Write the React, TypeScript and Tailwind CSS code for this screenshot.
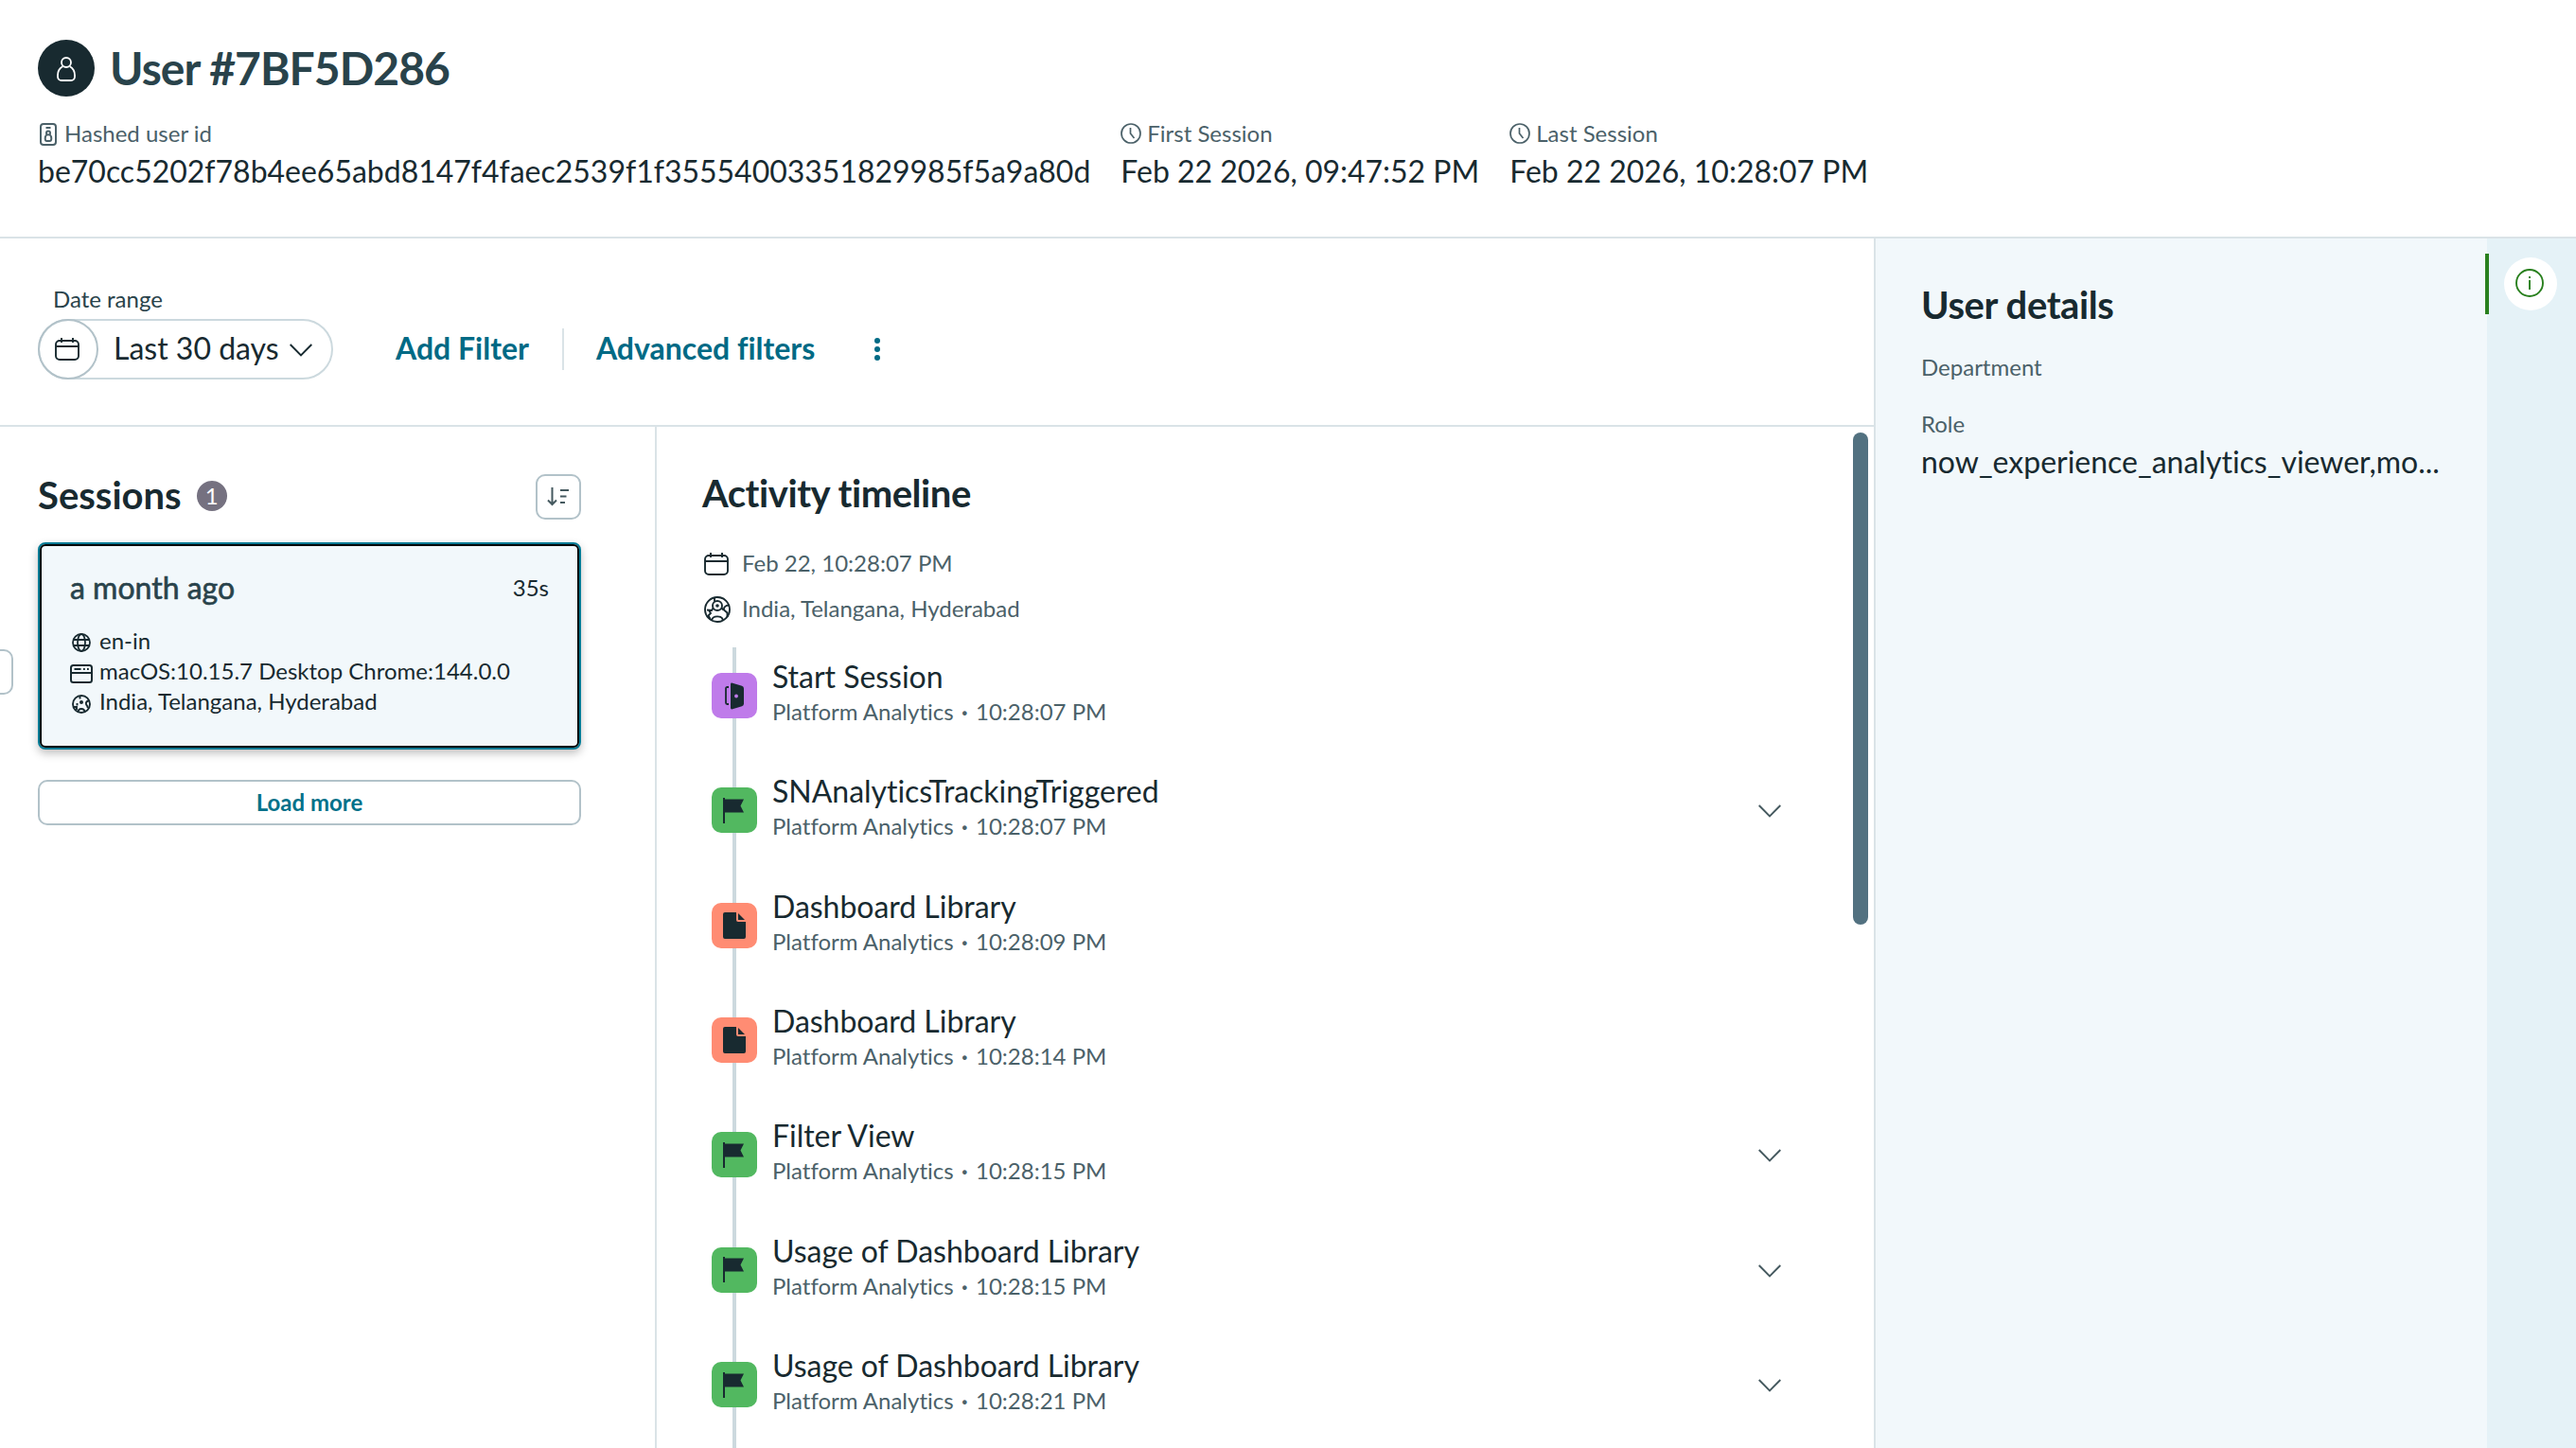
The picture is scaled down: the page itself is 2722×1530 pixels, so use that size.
import React from "react";

type EventKind = "session" | "event" | "page";

interface TimelineEvent {
  title: string;
  time: string;
  kind: EventKind;
  expandable?: boolean;
}

const events: TimelineEvent[] = [
  { title: "Start Session", time: "10:28:07 PM", kind: "session" },
  { title: "SNAnalyticsTrackingTriggered", time: "10:28:07 PM", kind: "event", expandable: true },
  { title: "Dashboard Library", time: "10:28:09 PM", kind: "page" },
  { title: "Dashboard Library", time: "10:28:14 PM", kind: "page" },
  { title: "Filter View", time: "10:28:15 PM", kind: "event", expandable: true },
  { title: "Usage of Dashboard Library", time: "10:28:15 PM", kind: "event", expandable: true },
  { title: "Usage of Dashboard Library", time: "10:28:21 PM", kind: "event", expandable: true },
];

const kindColor: Record<EventKind, string> = {
  session: "bg-[#bf7bea]",
  event: "bg-[#52b860]",
  page: "bg-[#ff8c73]",
};

function PersonIcon() {
  return (
    <svg width="20" height="26" viewBox="0 0 20 26" fill="none" stroke="white" strokeWidth="1.8">
      <circle cx="10" cy="6" r="5" />
      <path d="M6.200 10.200C3 12 1 15.500 1 19.500V21a4 4 0 0 0 4 4h10a4 4 0 0 0 4-4v-1.500c0-4-2-7.500-5.200-9.300" />
    </svg>
  );
}

function BadgeIcon() {
  return (
    <svg width="18" height="24" viewBox="0 0 18 24" fill="none" stroke="currentColor" strokeWidth="2">
      <rect x="1" y="1" width="16" height="22" rx="3" />
      <path d="M6.500 5h5" />
      <circle cx="9" cy="10.500" r="2" />
      <path d="M7.300 12.500c-2.300 1.800-2 6.500.2 6.500h3c2.200 0 2.500-4.700.2-6.500" />
    </svg>
  );
}

function ClockIcon() {
  return (
    <svg width="22" height="22" viewBox="0 0 22 22" fill="none" stroke="currentColor" strokeWidth="1.7">
      <circle cx="11" cy="11" r="10" />
      <path d="M10.500 5v6l4 5" />
    </svg>
  );
}

function CalendarIcon() {
  return (
    <svg width="26" height="24" viewBox="0 0 26 24" fill="none" stroke="#182a30" strokeWidth="1.9">
      <rect x="1" y="3" width="24" height="20" rx="4" />
      <path d="M1 9h24M7 0v5M19 0v5" />
    </svg>
  );
}

function ChevronIcon() {
  return (
    <svg width="24" height="14" viewBox="0 0 24 14" fill="none" stroke="currentColor" strokeWidth="1.9">
      <path d="M.7 1 12 12.500 23.300 1" />
    </svg>
  );
}

function SortIcon() {
  return (
    <svg width="24" height="20" viewBox="0 0 24 20" fill="none" stroke="#45595f" strokeWidth="2">
      <path d="M5.500 0v18M1 13.500l4.500 4.500 4.500-4.500M14 3h9M14 9.500h6.500M14 16h5" />
    </svg>
  );
}

function LanguageIcon() {
  return (
    <svg width="20" height="20" viewBox="0 0 20 20" fill="none" stroke="currentColor" strokeWidth="1.8">
      <circle cx="10" cy="10" r="9" />
      <ellipse cx="10" cy="10" rx="4" ry="9" />
      <path d="M1.500 7h17M1.500 13h17" />
    </svg>
  );
}

function BrowserIcon() {
  return (
    <svg width="24" height="20" viewBox="0 0 24 20" fill="none" stroke="currentColor" strokeWidth="2">
      <rect x="1" y="1" width="22" height="18" rx="2.5" />
      <path d="M1 9h22M4.500 5h7M14 5h1.800M18 5h1.800" />
    </svg>
  );
}

function LocationIcon() {
  return (
    <svg width="28" height="28" viewBox="0 0 28 28" fill="none" stroke="#182a30" strokeWidth="1.9">
      <circle cx="14" cy="14" r="13" />
      <circle cx="14" cy="10" r="5" />
      <circle cx="14" cy="10" r="1.800" fill="#182a30" stroke="none" />
      <path d="M11 1.500v4M9.500 12.500 8 15l-5-.5M5 15l2 3-2.500 2.500 2 3.500M8 25.500c1-5.500 11-5.500 12 0M18.500 12.500l2 2M26 9.500c-3 0-5.500 2-5 5l3.500 3v4.500" />
    </svg>
  );
}

function SmallLocationIcon() {
  return (
    <svg width="20" height="20" viewBox="0 0 20 20" fill="none" stroke="currentColor" strokeWidth="1.9">
      <circle cx="10" cy="10" r="9" />
      <circle cx="10" cy="8" r="2" fill="currentColor" stroke="none" />
      <path d="M8.500 1v3.500M5.500 9v2.500M1.500 13H5v3M6.500 18c.5-4 6.500-4 7 0M18 6.500c-2 0-3.500 1.500-3 3.500s2 1.500 1.500 4" />
    </svg>
  );
}

function EventIcon({ kind }: { kind: EventKind }) {
  if (kind === "session") {
    return (
      <svg width="20" height="29" viewBox="0 0 20 29">
        <path d="M4 5H2.500Q1 5 1 6.500v15Q1 23 2.500 23H4" fill="none" stroke="#182a30" strokeWidth="1.8" />
        <path d="M6 2Q6 .2 8 .7l10 3q2 .7 2 2.800v16q0 2-2 2.800l-10 3Q6 28.800 6 27Z" fill="#182a30" />
        <circle cx="12" cy="14.500" r="1.900" fill="#bf7bea" />
      </svg>
    );
  }
  if (kind === "page") {
    return (
      <svg width="24" height="28" viewBox="0 0 24 28" fill="#182a30">
        <path d="M2 0h12v8q0 2 2 2h8v16q0 2-2 2H2q-2 0-2-2V2q0-2 2-2Z" />
        <path d="M16 1l7 7h-7Z" />
      </svg>
    );
  }
  return (
    <svg className="mr-0.5" width="22" height="27" viewBox="0 0 22 27" fill="#182a30">
      <path d="M0 0h2v1.500h20l-3.500 7 3.500 7H2V27H0Z" />
    </svg>
  );
}

function TimelineRow({ event }: { event: TimelineEvent }) {
  return (
    <li className="flex h-[121.35px] items-center">
      <div className={`flex size-12 shrink-0 items-center justify-center rounded-[10px] ${kindColor[event.kind]}`}>
        <EventIcon kind={event.kind} />
      </div>
      <div className="-mt-1.5 ml-4 flex-1">
        <p className="text-[32px] leading-[40px] tracking-[-0.03px]">{event.title}</p>
        <p className="text-[24px] leading-[34px] text-[#4b6169]">
          Platform Analytics <span className="mx-[2.25px] font-bold">·</span> {event.time}
        </p>
      </div>
      {event.expandable && (
        <button className="mr-[98px] mt-0.5 text-[#45595f]">
          <ChevronIcon />
        </button>
      )}
    </li>
  );
}

function HeaderField({ icon, label, value }: { icon: React.ReactNode; label: string; value: string }) {
  return (
    <div>
      <div className="flex h-8 items-center gap-1.5 text-[24px] text-[#4b6169]">
        {icon}
        {label}
      </div>
      <p className="mt-1 text-[32px] leading-[40px] tracking-[-0.012px]">{value}</p>
    </div>
  );
}

export default function App() {
  return (
    <div className="flex h-[1530px] w-[2722px] flex-col overflow-hidden bg-white font-['Lato',sans-serif] text-[#182a30] [font-variant-ligatures:none]">
      <header className="h-[252px] shrink-0 border-b-2 border-[#dae3e7] px-10 pt-[42px]">
        <div className="flex h-[60px] items-center gap-4">
          <div className="flex size-[60px] items-center justify-center rounded-full bg-[#182a30] pt-0.5">
            <PersonIcon />
          </div>
          <h1 className="text-[48px] font-bold tracking-[-0.95px] text-[#29434b]">User #7BF5D286</h1>
        </div>
        <div className="mt-[23px] flex gap-8">
          <HeaderField
            icon={<span className="ml-0.5 mr-0.5 mt-0.5"><BadgeIcon /></span>}
            label="Hashed user id"
            value="be70cc5202f78b4ee65abd8147f4faec2539f1f35554003351829985f5a9a80d"
          />
          <HeaderField icon={<ClockIcon />} label="First Session" value="Feb 22 2026, 09:47:52 PM" />
          <HeaderField icon={<ClockIcon />} label="Last Session" value="Feb 22 2026, 10:28:07 PM" />
        </div>
      </header>

      <div className="flex min-h-0 flex-1">
        <main className="flex w-[1980px] shrink-0 flex-col">
          <div className="h-[199px] shrink-0 border-b-2 border-[#dae3e7] px-10 pt-[47px]">
            <p className="ml-4 h-[38px] text-[24px] leading-[34px] text-[#29434b]">Date range</p>
            <div className="flex h-16 items-center">
              <button className="flex h-16 w-[312px] items-center rounded-full border-2 border-[#ccd9de]">
                <span className="-ml-0.5 flex size-16 items-center justify-center rounded-full border-2 border-[#b2c2c9] pr-0.5">
                  <CalendarIcon />
                </span>
                <span className="-mt-0.5 ml-4 mr-[11px] text-[32px]">Last 30 days</span>
                <span className="mt-0.5">
                  <ChevronIcon />
                </span>
              </button>
              <button className="-mt-0.5 ml-[66px] text-[32px] font-bold text-[#006a85]">Add Filter</button>
              <div className="ml-[35px] mr-[34px] h-11 w-0.5 bg-[#dae3e7]" />
              <button className="-mt-0.5 text-[32px] font-bold text-[#006a85]">Advanced filters</button>
              <button className="ml-[63px] flex flex-col gap-[3px]">
                <span className="size-1.5 rounded-full bg-[#006a85]" />
                <span className="size-1.5 rounded-full bg-[#006a85]" />
                <span className="size-1.5 rounded-full bg-[#006a85]" />
              </button>
            </div>
          </div>

          <div className="flex min-h-0 flex-1">
            <section className="relative w-[694px] shrink-0 border-r-2 border-[#dae3e7] pl-10 pr-[78px] pt-[50px]">
              {/* collapsed nav handle, cut off by the window edge */}
              <div className="absolute left-[-20px] top-[235px] h-12 w-[34px] rounded-[10px] border-2 border-[#b2c2c9]" />
              <div className="flex h-12 items-center">
                <h2 className="-mt-1 text-[40px] font-bold">Sessions</h2>
                <span className="-mt-0.5 ml-4 flex size-8 items-center justify-center rounded-full bg-[#757180] text-[24px] text-white">1</span>
                <button className="ml-auto flex size-12 items-center justify-center rounded-[10px] border-2 border-[#b2c2c9]">
                  <SortIcon />
                </button>
              </div>
              <div className="mt-6 h-[219px] rounded-lg border-2 border-[#007a94] bg-[#f2f8fb] shadow-[0_4px_10px_rgba(0,0,0,0.25)]">
                <div className="h-full rounded-md border-2 border-black px-[30px] pt-6">
                  <div className="flex items-center justify-between">
                    <h3 className="text-[32px] leading-[40px] text-[#29434b] [-webkit-text-stroke:0.6px_#29434b]">a month ago</h3>
                    <span className="text-[24px]">35s</span>
                  </div>
                  <div className="mt-5 text-[24px] leading-[32px]">
                    <p className="flex items-center gap-[7px]">
                      <span className="mt-1 w-6 pl-0.5"><LanguageIcon /></span>
                      en-in
                    </p>
                    <p className="flex items-center gap-[7px]">
                      <span className="mt-1.5 w-6"><BrowserIcon /></span>
                      macOS:10.15.7 Desktop Chrome:144.0.0
                    </p>
                    <p className="flex items-center gap-[7px]">
                      <span className="mt-1.5 w-6 pl-0.5"><SmallLocationIcon /></span>
                      India, Telangana, Hyderabad
                    </p>
                  </div>
                </div>
              </div>
              <button className="mt-8 h-12 w-full rounded-[10px] border-2 border-[#b2c2c9] text-[24px] font-bold text-[#00718a]">
                Load more
              </button>
            </section>

            <section className="relative min-w-0 flex-1 overflow-hidden pl-12">
              <h2 className="mt-[46px] text-[40px] font-bold leading-[48px] tracking-[-0.45px]">Activity timeline</h2>
              <div className="mt-[26px] flex h-12 items-center gap-3.5 pl-0.5 text-[24px] text-[#4b6169]">
                <span className="mt-0.5"><CalendarIcon /></span>
                Feb 22, 10:28:07 PM
              </div>
              <div className="flex h-12 items-center gap-3 pl-0.5 text-[24px] text-[#4b6169]">
                <span className="mt-0.5"><LocationIcon /></span>
                India, Telangana, Hyderabad
              </div>
              <div className="relative mt-[17px] flow-root h-[1000px] pl-2.5">
                <div className="absolute left-[32px] top-0 h-full w-1 bg-[#ccd9de]" />
                <ul className="relative -mt-[9.6px]">
                  {events.map((event, i) => (
                    <TimelineRow key={i} event={event} />
                  ))}
                </ul>
              </div>
              <div className="absolute right-1.5 top-1.5 h-[520px] w-4 rounded-full bg-[#527180]" />
            </section>
          </div>
        </main>

        <aside className="min-w-0 flex-1 border-l-2 border-[#dae3e7] bg-[#f2f8fb] px-12 pt-[46px]">
          <h2 className="text-[40px] font-bold leading-[48px] tracking-[-0.4px]">User details</h2>
          <p className="mt-[26px] text-[24px] leading-[32px] text-[#4b6169]">Department</p>
          <p className="mt-7 text-[24px] leading-[32px] text-[#4b6169]">Role</p>
          <p className="mt-1 text-[32px] leading-[40px]">now_experience_analytics_viewer,mo...</p>
        </aside>

        <nav className="relative w-[94px] shrink-0 bg-[#e5f2f7] pt-5">
          <div className="absolute left-[-2px] top-4 h-16 w-1 bg-[#29801e]" />
          <button className="ml-[18px] flex size-14 items-center justify-center rounded-full bg-white pb-0.5 pr-0.5">
            <svg width="30" height="30" viewBox="0 0 30 30" fill="none" stroke="#29801e" strokeWidth="1.9">
              <circle cx="15" cy="15" r="14" />
              <path d="M15 8v2M15 12v10" />
            </svg>
          </button>
        </nav>
      </div>
    </div>
  );
}
